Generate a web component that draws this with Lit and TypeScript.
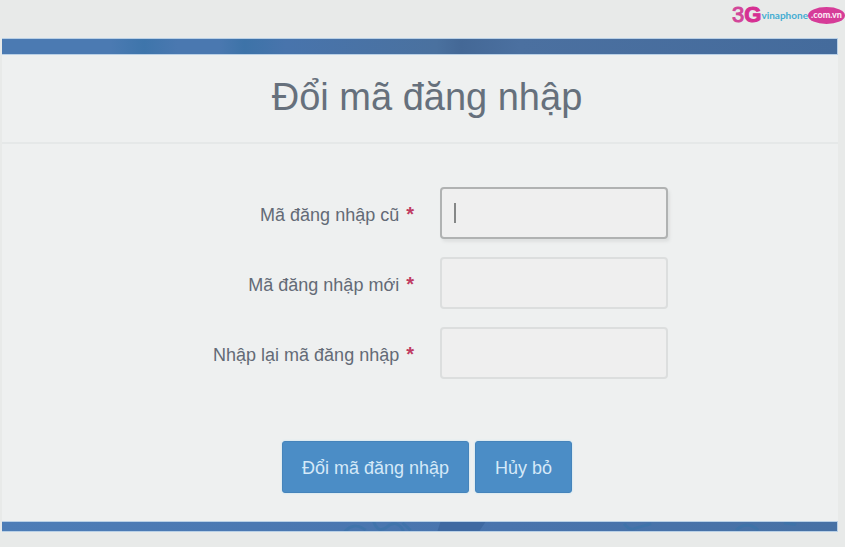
import { LitElement, html, css, svg } from "lit";
import { customElement } from "lit/decorators.js";

const FIELDS = [
  { id: "old-code", label: "Mã đăng nhập cũ", active: true },
  { id: "new-code", label: "Mã đăng nhập mới", active: false },
  { id: "repeat-code", label: "Nhập lại mã đăng nhập", active: false },
];

@customElement("site-logo")
class SiteLogo extends LitElement {
  static styles = css`
    :host {
      display: block;
    }
    .logo {
      display: flex;
      align-items: center;
      height: 20px;
      text-decoration: none;
      font-family: "Liberation Sans", Arial, sans-serif;
      line-height: 20px;
    }
    .three {
      color: #d2469a;
      font-size: 22px;
      -webkit-text-stroke: 1px #d2469a;
    }
    .gee {
      color: #d62f92;
      font-size: 22px;
      font-weight: 700;
      -webkit-text-stroke: 1px #d62f92;
    }
    .name {
      color: #45add2;
      font-family: Lato, "Liberation Sans", sans-serif;
      font-size: 10px;
      font-weight: 700;
    }
    .domain {
      box-sizing: border-box;
      width: 37px;
      height: 17px;
      border-radius: 50%;
      background: #d63c98;
      color: #fbe9f4;
      font-family: Lato, "Liberation Sans", sans-serif;
      font-size: 9px;
      font-weight: 900;
      line-height: 16px;
      text-align: center;
    }
  `;

  render() {
    return html`<a class="logo" href="#">
      <span class="three">3</span><span class="gee">G</span><span class="name">vinaphone</span><span class="domain">.com.vn</span>
    </a>`;
  }
}

@customElement("app-root")
class AppRoot extends LitElement {
  static styles = css`
    :host {
      display: flex;
      flex-direction: column;
      box-sizing: border-box;
      min-height: 100vh;
      padding: 5px 7px 14px 2px;
      background: #e8eae9;
      color: #636a76;
      font-family: "Liberation Sans", Arial, sans-serif;
      font-size: 18px;
      line-height: 24px;
    }
    .top {
      display: flex;
      justify-content: flex-end;
      height: 33px;
      margin-right: -7px;
    }
    .panel {
      background: #eef0f0;
    }
    .bar {
      border: 1px solid #b9d0e6;
      border-left: 0;
      height: 15px;
      background: linear-gradient(
        90deg,
        #4b7ab2 0%,
        #4b7ab2 13%,
        #3e75ab 17%,
        #4a78b0 21%,
        #4a78b0 26%,
        #3d73a8 29%,
        #4874ac 34%,
        #4a719f 52%,
        #446896 55%,
        #4b70a0 62%,
        #446b9c 100%
      );
    }
    .bar.bottom {
      height: 9px;
      background: linear-gradient(90deg, #4d7db7, #4974ad 60%, #4771a5);
    }
    .marks {
      display: block;
      width: 100%;
      height: 9px;
    }
    .title {
      margin: 0;
      padding: 19px 0 22px 14px;
      border-bottom: 2px solid #e5e8e8;
      text-align: center;
      font-size: 38px;
      font-weight: 400;
      line-height: 46px;
      color: #66707c;
    }
    .form {
      padding: 43px 0 28px 14px;
    }
    .rows {
      display: grid;
      gap: 18px;
    }
    .row {
      display: grid;
      grid-template-columns: 1fr 1fr;
      column-gap: 26px;
      align-items: center;
    }
    .label {
      padding-top: 2px;
      text-align: right;
    }
    .star {
      margin-left: 2px;
      color: #c03c62;
      font-size: 20px;
      font-weight: 700;
    }
    .field {
      position: relative;
      width: 228px;
      max-width: 100%;
    }
    .input {
      display: block;
      box-sizing: border-box;
      width: 100%;
      height: 52px;
      padding: 0 13px;
      border: 2px solid #dcdede;
      border-radius: 4px;
      outline: none;
      background: #efefef;
      color: inherit;
      font: inherit;
    }
    .input.active {
      border-color: #b0b2b2;
      box-shadow: 2px 3px 3px #dfe1e1;
      caret-color: transparent;
    }
    .caret {
      position: absolute;
      left: 14px;
      top: 16px;
      width: 2px;
      height: 20px;
      background: #858787;
      pointer-events: none;
    }
    .actions {
      display: flex;
      justify-content: center;
      gap: 6px;
      margin-top: 62px;
    }
    .button {
      height: 52px;
      padding: 2px 19px 0;
      border: 1px solid #4584bb;
      border-radius: 3px;
      background: #4b8dc6;
      box-shadow: 0 0 2px #b4dcf2;
      color: #d5e9f8;
      font: inherit;
    }
  `;

  private marks() {
    return svg`
      <g fill="none" stroke="#3b73a9" stroke-width="3" opacity="0.65">
        <path d="M343 11 Q352 -1 364 9 M372 -1 Q376 13 385 6 Q395 -4 402 10 M401 1 L409 9"/>
        <path d="M623 2 Q628 10 634 7 L650 2 M735 9 Q746 -2 757 9 M783 1 L795 3"/>
      </g>
      <path d="M439 0 H484 L478 10 H436 Z" fill="#3f69a1"/>`;
  }

  render() {
    return html`
      <header class="top"><site-logo></site-logo></header>
      <main class="panel">
        <div class="bar"></div>
        <h1 class="title">Đổi mã đăng nhập</h1>
        <form class="form" @submit=${(e: Event) => e.preventDefault()}>
          <div class="rows">
            ${FIELDS.map(
              (f) => html`<div class="row">
                <label class="label" for=${f.id}>${f.label} <span class="star">*</span></label>
                <div class="field">
                  <input class="input ${f.active ? "active" : ""}" id=${f.id} type="password" required />
                  ${f.active ? html`<span class="caret"></span>` : ""}
                </div>
              </div>`
            )}
          </div>
          <div class="actions">
            <button class="button" type="submit">Đổi mã đăng nhập</button>
            <button class="button" type="button">Hủy bỏ</button>
          </div>
        </form>
        <div class="bar bottom">
          <svg class="marks" viewBox="0 0 836 10" preserveAspectRatio="none" aria-hidden="true">${this.marks()}</svg>
        </div>
      </main>
    `;
  }
}
